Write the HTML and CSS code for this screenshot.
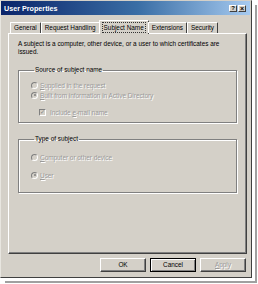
FILE: index.html
```html
<!DOCTYPE html>
<html>
<head>
<meta charset="utf-8">
<link rel="stylesheet" href="styles.css">
</head>
<body>
<div class="window">
  <div class="titlebar">
    <span class="title">User Properties</span>
    <div class="tbtns">
      <span class="tbtn">?</span>
      <span class="tbtn x">×</span>
    </div>
  </div>
  <div class="tabs">
    <span class="tab">General</span>
    <span class="tab">Request Handling</span>
    <span class="tab active"><span class="focus">Subject Name</span></span>
    <span class="tab">Extensions</span>
    <span class="tab">Security</span>
  </div>
  <div class="panel">
    <p class="intro">A subject is a computer, other device, or a user to which certificates are issued.</p>
    <fieldset class="group g1">
      <legend>Source of subject name</legend>
      <div class="opt"><span class="radio"></span><span class="dis"><u>S</u>upplied in the request</span></div>
      <div class="opt"><span class="radio on"></span><span class="dis"><u>B</u>uilt from information in Active Directory</span></div>
      <div class="opt sub"><span class="check">✓</span><span class="dis">Include <u>e</u>-mail name</span></div>
    </fieldset>
    <fieldset class="group g2">
      <legend>Type of subject</legend>
      <div class="opt"><span class="radio"></span><span class="dis"><u>C</u>omputer or other device</span></div>
      <div class="opt"><span class="radio on"></span><span class="dis"><u>U</u>ser</span></div>
    </fieldset>
  </div>
  <div class="buttons">
    <span class="btn">OK</span>
    <span class="btn def">Cancel</span>
    <span class="btn disabled"><u>A</u>pply</span>
  </div>
</div>
</body>
</html>
```
FILE: styles.css
```css
html, body { margin: 0; padding: 0; }
body {
  width: 258px; height: 284px; overflow: hidden; background: #fff;
  font-family: "Liberation Sans", Arial, sans-serif; font-size: 6.4px; color: #000;
}
.window {
  width: 252px; height: 278px; box-sizing: border-box;
  background: #d4d0c8;
  border-top: 1px solid #d4d0c8; border-left: 1px solid #e8e6e0;
  border-right: 1px solid #404040; border-bottom: 1px solid #404040;
  box-shadow: 3px 3px 0 0 #fff, 5px 5px 0 0 #a0a0a0;
  display: flex; flex-direction: column;
}
.titlebar {
  height: 14px; flex: none;
  margin: 0 1px 0 0;
  background: linear-gradient(to right, #0a246a, #3a6ea5 55%, #a6caf0);
  display: flex; align-items: center; justify-content: space-between;
  padding: 0 4px 0 3px;
}
.title { color: #fff; font-weight: bold; font-size: 7.2px; }
.tbtns { display: flex; gap: 1px; }
.tbtn {
  width: 8px; height: 7px; background: #d4d0c8; box-sizing: border-box;
  border-top: 1px solid #fff; border-left: 1px solid #fff;
  border-right: 1px solid #404040; border-bottom: 1px solid #404040;
  font-size: 6px; font-weight: bold; line-height: 5px; text-align: center;
}
.tbtn.x { font-size: 7px; }
.tabs {
  display: flex; align-items: flex-end; margin-top: 5px; padding-left: 9px;
  height: 13px; flex: none; position: relative; z-index: 1;
}
.tab {
  height: 11px; box-sizing: border-box; padding: 0 3px;
  border-top: 1px solid #fff; border-left: 1px solid #fff; border-right: 1px solid #404040;
  line-height: 10px; white-space: nowrap;
  border-radius: 1px 1px 0 0;
}
.tab.active {
  margin: 0 -1px -1px; padding: 1px 2px 0; line-height: 9px;
  background: #d4d0c8; height: 14px;
}
.focus { display: block; border: 1px dotted #333; padding: 0 1px; }
.panel {
  margin: 0 4px 0 7px; height: 221px; box-sizing: border-box; flex: none;
  border-top: 1px solid #fff; border-left: 1px solid #fff;
  border-right: 1px solid #404040; border-bottom: 1px solid #404040;
  box-shadow: inset -1px -1px 0 #808080;
  padding: 6px 9px 0 9px;
  display: flex; flex-direction: column;
}
.intro { margin: 0; line-height: 8px; width: 215px; }
.group {
  margin: 0; padding: 0 0 0 12px; min-width: 0; width: 219px; box-sizing: border-box;
  border: 1px solid #808080; box-shadow: 1px 1px 0 #fff, inset 1px 1px 0 #fff;
  display: flex; flex-direction: column;
}
.group legend { padding: 0 1px; margin-left: 3px; line-height: 8px; }
.g1 { margin-top: 10px; height: 57px; padding-top: 6px; }
.g2 { margin-top: 12px; height: 58px; padding-top: 9px; }
.opt { display: flex; align-items: center; height: 10px; gap: 2px; }
.g1 .sub { margin-top: 7px; padding-left: 8px; gap: 4px; }
.g2 .opt + .opt { margin-top: 8px; }
.dis { color: #9a9a9a; text-shadow: 1px 1px 0 #fff; white-space: nowrap; }
.radio {
  width: 7px; height: 7px; border-radius: 50%; box-sizing: border-box; flex: none;
  border: 1px solid #808080; border-right-color: #fff; border-bottom-color: #fff;
  background: #d4d0c8; position: relative;
}
.radio.on::after {
  content: ""; position: absolute; left: 1.5px; top: 1.5px; width: 2px; height: 2px;
  border-radius: 50%; background: #808080;
}
.check {
  width: 7px; height: 7px; box-sizing: border-box; flex: none;
  border: 1px solid #808080; border-right-color: #fff; border-bottom-color: #fff;
  background: #d4d0c8; color: #808080; font-size: 6px; line-height: 5px; text-align: center;
}
.buttons {
  display: flex; justify-content: flex-end; gap: 4px; padding-right: 5px; margin-top: 4px;
}
.btn {
  width: 46px; height: 14px; box-sizing: border-box; text-align: center; line-height: 12px;
  border-top: 1px solid #fff; border-left: 1px solid #fff;
  border-right: 1px solid #404040; border-bottom: 1px solid #404040;
  box-shadow: inset -1px -1px 0 #808080;
}
.btn.def { border: 1px solid #000; box-shadow: inset 1px 1px 0 #fff, inset -1px -1px 0 #808080; }
.btn.disabled { color: #9a9a9a; text-shadow: 1px 1px 0 #fff; }
```
